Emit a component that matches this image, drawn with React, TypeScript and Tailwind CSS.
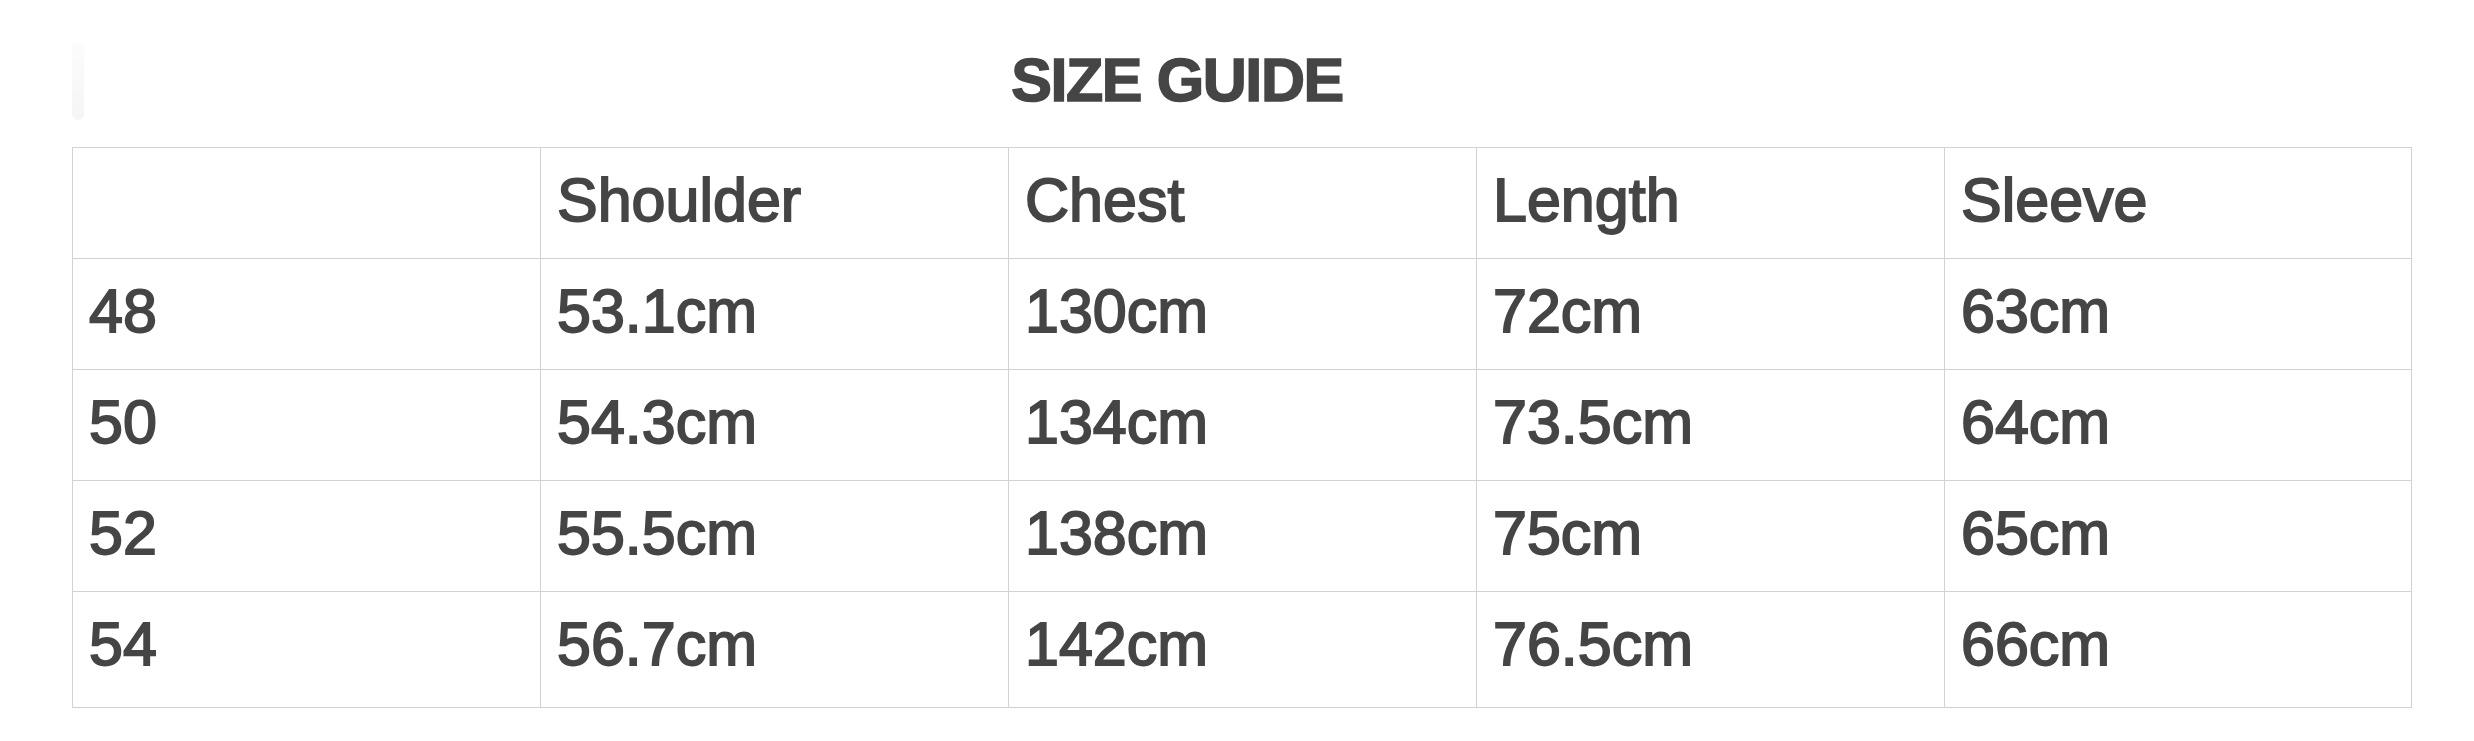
const headers = ["", "Shoulder", "Chest", "Length", "Sleeve"];

const rows = [
  ["48", "53.1cm", "130cm", "72cm", "63cm"],
  ["50", "54.3cm", "134cm", "73.5cm", "64cm"],
  ["52", "55.5cm", "138cm", "75cm", "65cm"],
  ["54", "56.7cm", "142cm", "76.5cm", "66cm"],
];

function Cell({ text, last }: { text: string; last?: boolean }) {
  return (
    <div
      className={`border-r border-b border-[#d2d2d2] pl-[16px] pt-[22px] text-[61px] leading-none [-webkit-text-stroke:1.8px_#454545] ${
        last ? "h-[116px]" : "h-[111px]"
      }`}
    >
      {text}
    </div>
  );
}

export default function App() {
  return (
    <div className="h-[741px] w-[2474px] bg-white font-['Liberation_Sans',Arial,sans-serif] text-[#454545]">
      <div className="relative flex h-[147px] w-[2354px] justify-center pt-[50px]">
        <div className="absolute left-[72px] top-[43px] h-[77px] w-[12px] rounded-b-[6px] bg-gradient-to-b from-[#fcfcfc] to-[#f5f5f5]" />
        <h1 className="text-[61px] font-bold leading-none tracking-[-1.4px] [-webkit-text-stroke:1.5px_#454545]">
          SIZE GUIDE
        </h1>
      </div>
      <div className="ml-[72px] grid w-[2340px] grid-cols-[468px_468px_468px_468px_467px] border-t border-l border-[#d2d2d2]">
        {headers.map((h, i) => (
          <Cell key={`h${i}`} text={h} />
        ))}
        {rows.map((r, ri) =>
          r.map((c, ci) => <Cell key={`${ri}-${ci}`} text={c} last={ri === rows.length - 1} />)
        )}
      </div>
    </div>
  );
}
